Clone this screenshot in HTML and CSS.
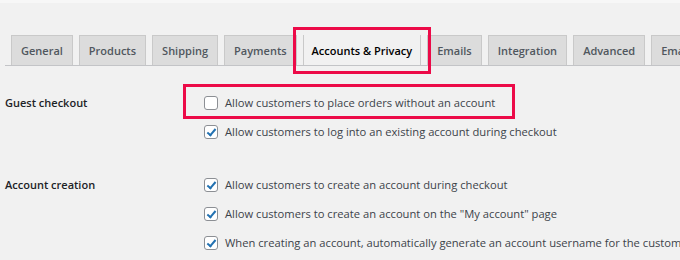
FILE: index.html
```html
<!DOCTYPE html>
<html>
<head>
<meta charset="utf-8">
<link rel="stylesheet" href="styles.css">
</head>
<body>
<div class="topband"></div>
<nav class="tabs">
  <span class="tab">General</span>
  <span class="tab">Products</span>
  <span class="tab">Shipping</span>
  <span class="tab">Payments</span>
  <span class="tab active">Accounts &amp; Privacy</span>
  <span class="tab">Emails</span>
  <span class="tab">Integration</span>
  <span class="tab">Advanced</span>
  <span class="tab">Email Customizer</span>
</nav>
<div class="form">
  <div class="section">
    <div class="label">Guest checkout</div>
    <div class="options">
      <label class="opt"><span class="cb"></span>Allow customers to place orders without an account</label>
      <label class="opt"><span class="cb on"></span>Allow customers to log into an existing account during checkout</label>
    </div>
  </div>
  <div class="section">
    <div class="label">Account creation</div>
    <div class="options">
      <label class="opt"><span class="cb on"></span>Allow customers to create an account during checkout</label>
      <label class="opt"><span class="cb on"></span>Allow customers to create an account on the "My account" page</label>
      <label class="opt"><span class="cb on"></span>When creating an account, automatically generate an account username for the customer</label>
    </div>
  </div>
</div>
<div class="mark mark-tab"></div>
<div class="mark mark-opt"></div>
</body>
</html>
```
FILE: styles.css
```css
html, body {
  margin: 0;
  padding: 0;
  background: #f1f1f1;
  width: 680px;
  height: 260px;
  overflow: hidden;
  font-family: "Open Sans", "Noto Sans", sans-serif;
  position: relative;
}
.topband {
  height: 3px;
  background: #f7f7f7;
}
.tabs {
  display: flex;
  gap: 6px;
  margin: 32px 0 0 5px;
  padding-left: 6px;
  border-bottom: 1px solid #c3c4c7;
  height: 30px;
  align-items: flex-end;
  white-space: nowrap;
  overflow: hidden;
}
.tab {
  flex: none;
  box-sizing: border-box;
  height: 30px;
  padding: 0 9px;
  border: 1px solid #c9c9c9;
  border-bottom: 0;
  background: #dcdcdc;
  color: #50575e;
  font-size: 11px;
  font-weight: 600;
  line-height: 29px;
}
.tab.active {
  height: 31px;
  background: #f1f1f1;
  color: #000;
  padding: 0 8px;
  font-size: 11px;
  line-height: 31px;
}
.form {
  padding: 22px 0 0 5px;
  overflow: hidden;
}
.section {
  display: flex;
  margin-bottom: 24px;
}
.section:last-child {
  margin-bottom: 0;
}
.label {
  width: 199px;
  flex: none;
  font-size: 11px;
  font-weight: 600;
  color: #1d2327;
  line-height: 29px;
}
.options {
  display: flex;
  flex-direction: column;
  min-width: 0;
}
.opt {
  display: flex;
  align-items: center;
  height: 29px;
  font-size: 11.2px;
  color: #3c434a;
  white-space: nowrap;
}
.cb {
  flex: none;
  box-sizing: border-box;
  width: 14px;
  height: 14px;
  border: 1px solid #8c8f94;
  border-radius: 3px;
  background: #fff;
  margin-right: 7px;
  position: relative;
}
.cb.on::after {
  content: "";
  position: absolute;
  left: 4px;
  top: 1px;
  width: 3px;
  height: 7px;
  border: solid #2271b1;
  border-width: 0 2px 2px 0;
  transform: rotate(40deg);
}
.mark {
  position: absolute;
  border: 3px solid #ec0a48;
  box-sizing: border-box;
}
.mark-tab {
  left: 293px;
  top: 27px;
  width: 138px;
  height: 47px;
}
.mark-opt {
  left: 183px;
  top: 84px;
  width: 332px;
  height: 35px;
}
```
